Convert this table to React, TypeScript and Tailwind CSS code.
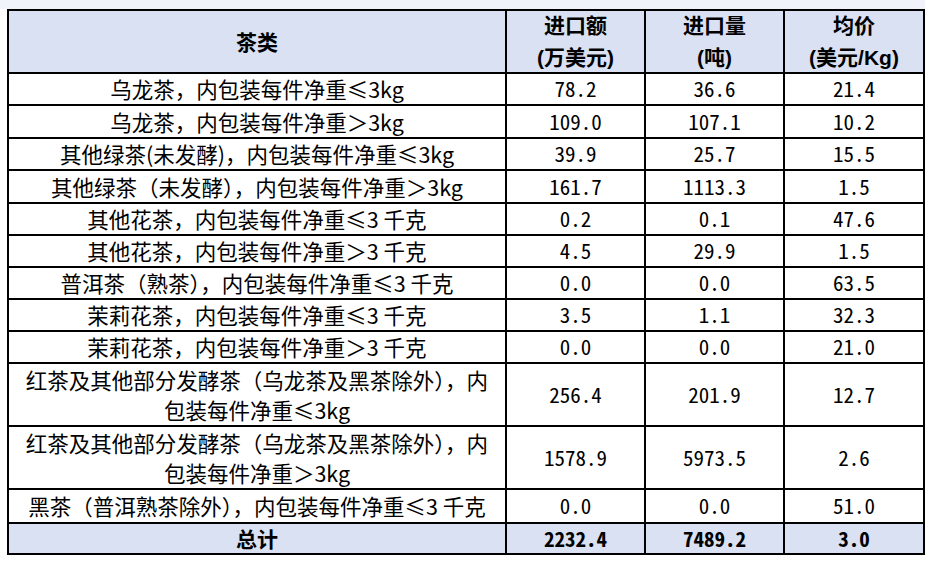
import React from "react";

type Row = { label: React.ReactNode; a: string; b: string; c: string };

const rows: Row[] = [
  { label: "乌龙茶，内包装每件净重≤3kg", a: "78.2", b: "36.6", c: "21.4" },
  { label: "乌龙茶，内包装每件净重＞3kg", a: "109.0", b: "107.1", c: "10.2" },
  { label: "其他绿茶(未发酵)，内包装每件净重≤3kg", a: "39.9", b: "25.7", c: "15.5" },
  { label: "其他绿茶（未发酵），内包装每件净重＞3kg", a: "161.7", b: "1113.3", c: "1.5" },
  { label: "其他花茶，内包装每件净重≤3 千克", a: "0.2", b: "0.1", c: "47.6" },
  { label: "其他花茶，内包装每件净重＞3 千克", a: "4.5", b: "29.9", c: "1.5" },
  { label: "普洱茶（熟茶），内包装每件净重≤3 千克", a: "0.0", b: "0.0", c: "63.5" },
  { label: "茉莉花茶，内包装每件净重≤3 千克", a: "3.5", b: "1.1", c: "32.3" },
  { label: "茉莉花茶，内包装每件净重＞3 千克", a: "0.0", b: "0.0", c: "21.0" },
  {
    label: (
      <>
        红茶及其他部分发酵茶（乌龙茶及黑茶除外），内
        <br />
        包装每件净重≤3kg
      </>
    ),
    a: "256.4",
    b: "201.9",
    c: "12.7",
  },
  {
    label: (
      <>
        红茶及其他部分发酵茶（乌龙茶及黑茶除外），内
        <br />
        包装每件净重＞3kg
      </>
    ),
    a: "1578.9",
    b: "5973.5",
    c: "2.6",
  },
  { label: "黑茶（普洱熟茶除外），内包装每件净重≤3 千克", a: "0.0", b: "0.0", c: "51.0" },
];

const labelFont = "font-['Noto_Sans_CJK_SC','Liberation_Sans',sans-serif]";
const headFont = "font-['Liberation_Sans','Noto_Sans_CJK_SC',sans-serif]";
const numFont = "font-['Noto_Sans_Mono_CJK_SC','DejaVu_Sans_Mono',monospace]";

export default function App() {
  return (
    <div className="w-[934px] h-[562px] bg-white relative overflow-hidden">
      <div className="h-[9px] w-[925px] bg-[#f0f3fa]" />
      <div className="pl-[7px]">
        <div
          className={`grid w-[918px] bg-black gap-[2px] p-[2px] text-black ${labelFont} grid-cols-[496px_137px_137px_138px] grid-rows-[61px_30px_31px_30px_31px_30px_30px_30px_30px_30px_61px_61px_32px_29px]`}
        >
          <div className="bg-[#d9e1f2] flex items-center justify-center text-[21px] font-bold">
            茶类
          </div>
          <div className={`bg-[#d9e1f2] flex flex-col items-center justify-center text-[21px] font-bold leading-[32px] ${headFont}`}>
            <span>进口额</span>
            <span>(万美元)</span>
          </div>
          <div className={`bg-[#d9e1f2] flex flex-col items-center justify-center text-[21px] font-bold leading-[32px] ${headFont}`}>
            <span>进口量</span>
            <span>(吨)</span>
          </div>
          <div className={`bg-[#d9e1f2] flex flex-col items-center justify-center text-[21px] font-bold leading-[32px] ${headFont}`}>
            <span>均价</span>
            <span>(美元/Kg)</span>
          </div>
          {rows.map((r, i) => (
            <React.Fragment key={i}>
              <div className="bg-white flex items-center justify-center text-center text-[21.5px] leading-[30px] whitespace-nowrap">
                <span>{r.label}</span>
              </div>
              <div className={`bg-white flex items-center justify-center text-[21px] ${numFont}`}>
                {r.a}
              </div>
              <div className={`bg-white flex items-center justify-center text-[21px] ${numFont}`}>
                {r.b}
              </div>
              <div className={`bg-white flex items-center justify-center text-[21px] ${numFont}`}>
                {r.c}
              </div>
            </React.Fragment>
          ))}
          <div className="bg-[#d9e1f2] flex items-center justify-center text-[21px] font-bold">
            总计
          </div>
          <div className={`bg-[#d9e1f2] flex items-center justify-center text-[21px] font-bold ${numFont}`}>
            2232.4
          </div>
          <div className={`bg-[#d9e1f2] flex items-center justify-center text-[21px] font-bold ${numFont}`}>
            7489.2
          </div>
          <div className={`bg-[#d9e1f2] flex items-center justify-center text-[21px] font-bold ${numFont}`}>
            3.0
          </div>
        </div>
      </div>
    </div>
  );
}
